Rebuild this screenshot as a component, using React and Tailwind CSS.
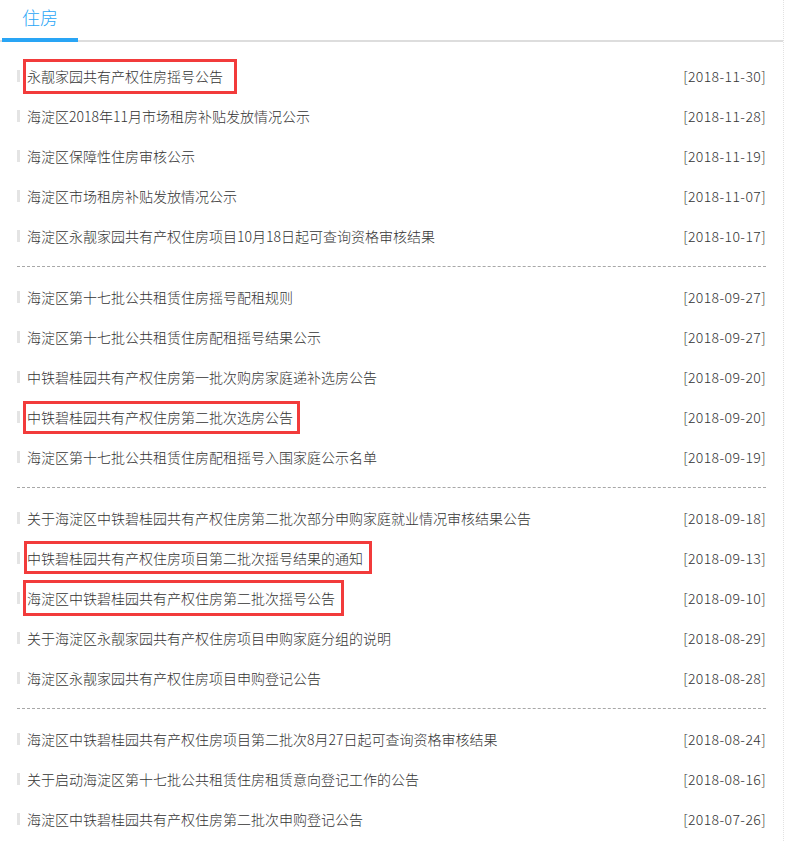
const groups = [
  [
    { title: "永靓家园共有产权住房摇号公告", date: "2018-11-30", mark: { top: 3, left: 6, width: 214, height: 35 } },
    { title: "海淀区2018年11月市场租房补贴发放情况公示", date: "2018-11-28" },
    { title: "海淀区保障性住房审核公示", date: "2018-11-19" },
    { title: "海淀区市场租房补贴发放情况公示", date: "2018-11-07" },
    { title: "海淀区永靓家园共有产权住房项目10月18日起可查询资格审核结果", date: "2018-10-17" },
  ],
  [
    { title: "海淀区第十七批公共租赁住房摇号配租规则", date: "2018-09-27" },
    { title: "海淀区第十七批公共租赁住房配租摇号结果公示", date: "2018-09-27" },
    { title: "中铁碧桂园共有产权住房第一批次购房家庭递补选房公告", date: "2018-09-20" },
    { title: "中铁碧桂园共有产权住房第二批次选房公告", date: "2018-09-20", mark: { top: 4, left: 6, width: 277, height: 33 } },
    { title: "海淀区第十七批公共租赁住房配租摇号入围家庭公示名单", date: "2018-09-19" },
  ],
  [
    { title: "关于海淀区中铁碧桂园共有产权住房第二批次部分申购家庭就业情况审核结果公告", date: "2018-09-18" },
    { title: "中铁碧桂园共有产权住房项目第二批次摇号结果的通知", date: "2018-09-13", mark: { top: 3, left: 7, width: 348, height: 33 } },
    { title: "海淀区中铁碧桂园共有产权住房第二批次摇号公告", date: "2018-09-10", mark: { top: 2, left: 6, width: 321, height: 36 } },
    { title: "关于海淀区永靓家园共有产权住房项目申购家庭分组的说明", date: "2018-08-29" },
    { title: "海淀区永靓家园共有产权住房项目申购登记公告", date: "2018-08-28" },
  ],
  [
    { title: "海淀区中铁碧桂园共有产权住房项目第二批次8月27日起可查询资格审核结果", date: "2018-08-24" },
    { title: "关于启动海淀区第十七批公共租赁住房租赁意向登记工作的公告", date: "2018-08-16" },
    { title: "海淀区中铁碧桂园共有产权住房第二批次申购登记公告", date: "2018-07-26" },
  ],
];

function Row({ item }) {
  return (
    <li className="relative flex h-[40px] items-center justify-between">
      <div className="flex items-center">
        <span className="mr-[7px] h-[12px] w-[3px] bg-[#e4e4e4]" />
        <a href="#" className="text-[14px] font-light text-[#333]">
          {item.title}
        </a>
      </div>
      <span className="text-[14px] font-light tracking-[0.4px] text-[#333]">[{item.date}]</span>
      {item.mark && (
        <span
          className="pointer-events-none absolute border-[3px] border-[#f23b3b]"
          style={{
            top: item.mark.top,
            left: item.mark.left,
            width: item.mark.width,
            height: item.mark.height,
          }}
        />
      )}
    </li>
  );
}

export default function App() {
  return (
    <div
      className="min-h-[841px] w-[784px] border-r border-dotted border-[#e2e2e2] bg-white"
      style={{ fontFamily: '"Noto Sans CJK SC", "Noto Sans", sans-serif' }}
    >
      {/* Tab header */}
      <div className="flex h-[42px] border-b-2 border-[#dddddd] pl-[2px]">
        <div className="-mb-[2px] flex w-[76px] items-center justify-center border-b-4 border-[#29a5f5] pb-[4px] text-[18px] font-light text-[#2aa6f6]">
          住房
        </div>
      </div>

      {/* List */}
      <div className="pl-[17px] pr-[17px] pt-[14px]">
        {groups.map((group, i) => (
          <div key={i}>
            <ul>
              {group.map((item) => (
                <Row key={item.title + item.date} item={item} />
              ))}
            </ul>
            {i < groups.length - 1 && (
              <div className="my-[10px] border-t border-dashed border-[#a8a8a8]" />
            )}
          </div>
        ))}
      </div>
    </div>
  );
}
